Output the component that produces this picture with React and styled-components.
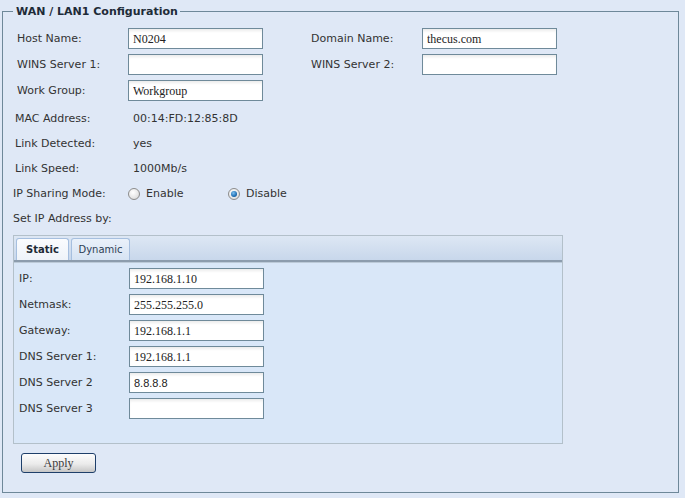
import React from 'react'
import styled, { createGlobalStyle } from 'styled-components'

const Global = createGlobalStyle`
  html, body {
    margin: 0;
    background: #dfe8f6;
  }
  body {
    font-family: "DejaVu Sans", Verdana, sans-serif;
    font-size: 11px;
    color: #333;
  }
`

const Page = styled.div`
  padding: 4px 6px 5px 2px;
`

const Fieldset = styled.fieldset`
  margin: 0;
  padding: 9px 0 19px;
  border: 1px solid #6e8899;
  min-width: 0;
`

const Legend = styled.legend`
  margin-left: 10px;
  padding: 0 2px 0 3px;
  font-weight: bold;
  font-size: 11px;
  line-height: 15px;
  color: #1e2b38;
`

const TopGrid = styled.div`
  display: grid;
  grid-template-columns: 111px 183px 111px 135px;
  grid-auto-rows: 26px;
  padding-left: 14px;
`

const Label = styled.div`
  line-height: 21px;
  white-space: nowrap;
`

const TextBox = styled.input`
  box-sizing: border-box;
  width: 135px;
  height: 21px;
  margin: 0;
  padding: 1px 4px 0;
  border: 1px solid #6f8a9a;
  border-radius: 0;
  background: #fff;
  box-shadow: inset 0 3px 3px -1px rgba(0, 0, 0, 0.08);
  font-family: ${p => (p.$sans ? '"Liberation Sans", Arial, sans-serif' : '"Liberation Serif", "Times New Roman", serif')};
  font-size: ${p => (p.$sans ? '11px' : '12px')};
  color: #222;
  outline: none;
`

const InfoRow = styled.div`
  display: flex;
  align-items: center;
  height: 25px;
  padding-left: ${p => p.$indent}px;
  white-space: nowrap;
`

const Key = styled.div`
  width: ${p => p.$width}px;
  flex: none;
`

const Option = styled.label`
  display: inline-flex;
  align-items: center;
  gap: 6px;
  width: 100px;
`

const Radio = styled.input`
  appearance: none;
  box-sizing: border-box;
  width: 12px;
  height: 12px;
  margin: 0;
  border: 1px solid #8c8c8c;
  border-radius: 50%;
  background: radial-gradient(circle at 40% 35%, #ffffff 0%, #e8e8e8 55%, #cfcfcf 100%);
  position: relative;

  &:checked::after {
    content: '';
    position: absolute;
    left: 2px;
    top: 2px;
    width: 6px;
    height: 6px;
    border-radius: 50%;
    background: radial-gradient(circle at 40% 35%, #7fc1f0 0%, #1f6fb4 60%, #0d3f73 100%);
  }
`

const Panel = styled.div`
  box-sizing: border-box;
  margin: 4px 0 0 10px;
  width: 550px;
  height: 209px;
  border: 1px solid #b3c0ca;
  background: #d9e7f8;
`

const TabStrip = styled.div`
  display: flex;
  align-items: flex-end;
  gap: 2px;
  height: 24px;
  padding-left: 2px;
  background: linear-gradient(#dde7f4, #c8d7eb);
  border-bottom: 2px solid #8c9cad;
  box-shadow: 0 1px 0 #bccad8;
`

const Tab = styled.div`
  box-sizing: border-box;
  width: ${p => p.$width}px;
  height: 22px;
  border: 1px solid #a6bfdf;
  border-bottom: none;
  border-radius: 3px 3px 0 0;
  background: ${p => (p.$active ? 'linear-gradient(#fbfcfe, #eef3f9)' : 'linear-gradient(#eaf1fa, #d6e3f3)')};
  font-size: 10px;
  font-weight: ${p => (p.$active ? 'bold' : 'normal')};
  color: ${p => (p.$active ? '#1d2a36' : '#2e3f55')};
  line-height: 21px;
  text-align: center;
`

const PanelGrid = styled.div`
  display: grid;
  grid-template-columns: 110px 135px;
  grid-auto-rows: 26px;
  padding: 6px 0 0 5px;
`

const ApplyButton = styled.button`
  display: block;
  box-sizing: border-box;
  margin: 9px 0 0 18px;
  width: 75px;
  height: 20px;
  padding: 0;
  border: 1px solid #1e3f6a;
  border-radius: 3px;
  background: linear-gradient(#fdfdfd, #ebebeb 55%, #c6c6c6);
  font-family: "Liberation Serif", "Times New Roman", serif;
  font-size: 12px;
  color: #3a3a3a;
`

const topFields = [
  ['Host Name:', 'N0204', 'Domain Name:', 'thecus.com'],
  ['WINS Server 1:', '', 'WINS Server 2:', ''],
  ['Work Group:', 'Workgroup'],
]

const info = [
  ['MAC Address:', '00:14:FD:12:85:8D'],
  ['Link Detected:', 'yes'],
  ['Link Speed:', '1000Mb/s'],
]

const ipFields = [
  ['IP:', '192.168.1.10'],
  ['Netmask:', '255.255.255.0'],
  ['Gateway:', '192.168.1.1'],
  ['DNS Server 1:', '192.168.1.1'],
  ['DNS Server 2', '8.8.8.8', true],
  ['DNS Server 3', ''],
]

export default function App () {
  return (
    <Page>
      <Global />
      <Fieldset>
        <Legend>WAN / LAN1 Configuration</Legend>
        <TopGrid>
          {topFields.map(([l1, v1, l2, v2]) => (
            <React.Fragment key={l1}>
              <Label>{l1}</Label>
              <div><TextBox defaultValue={v1} /></div>
              {l2 ? <Label>{l2}</Label> : <div />}
              {l2 ? <div><TextBox defaultValue={v2} /></div> : <div />}
            </React.Fragment>
          ))}
        </TopGrid>
        {info.map(([k, v]) => (
          <InfoRow key={k} $indent={12}>
            <Key $width={118}>{k}</Key>
            <div>{v}</div>
          </InfoRow>
        ))}
        <InfoRow $indent={10}>
          <Key $width={115}>IP Sharing Mode:</Key>
          <Option><Radio type="radio" name="share" />Enable</Option>
          <Option><Radio type="radio" name="share" defaultChecked />Disable</Option>
        </InfoRow>
        <InfoRow $indent={10}>Set IP Address by:</InfoRow>
        <Panel>
          <TabStrip>
            <Tab $active $width={53}>Static</Tab>
            <Tab $width={59}>Dynamic</Tab>
          </TabStrip>
          <PanelGrid>
            {ipFields.map(([l, v, sans]) => (
              <React.Fragment key={l}>
                <Label>{l}</Label>
                <div><TextBox defaultValue={v} $sans={sans} /></div>
              </React.Fragment>
            ))}
          </PanelGrid>
        </Panel>
        <ApplyButton type="button">Apply</ApplyButton>
      </Fieldset>
    </Page>
  )
}
